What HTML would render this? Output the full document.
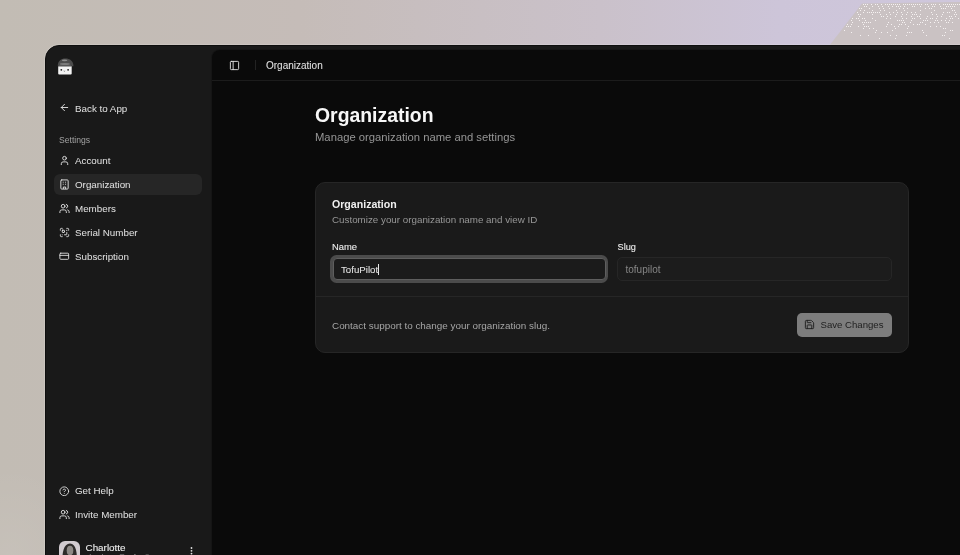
<!DOCTYPE html>
<html><head><meta charset="utf-8">
<style>
*{margin:0;padding:0;box-sizing:border-box}
html,body{width:960px;height:555px;overflow:hidden;-webkit-font-smoothing:antialiased}
body{position:relative;font-family:"Liberation Sans",sans-serif;background:radial-gradient(ellipse 80px 90px at 10px 555px,rgba(255,255,255,.07),rgba(255,255,255,0)),linear-gradient(90deg,#c2bcb4 0px,#c5bcb8 300px,#cac1ca 600px,#cdc5d9 780px,#cfc7dc 960px)}
.abs{position:absolute;white-space:nowrap}
.win{position:absolute;left:45px;top:45px;width:940px;height:560px;background:#191919;border-top-left-radius:14px;border:1px solid #0e0e0e;box-shadow:0 0 0 1px rgba(255,255,255,.14)}
.main{position:absolute;left:212px;top:50px;width:760px;height:520px;background:#0a0a0a;border-top-left-radius:8px;box-shadow:0 0 0 1px #151515}
.t10{font-size:10px;line-height:21px;color:#e4e4e4}
.item{position:absolute;left:54px;width:148px;height:21px;border-radius:6px}
.item svg{position:absolute;left:5px;top:5px}
.item span{position:absolute;left:21px;top:0;font-size:9.8px;line-height:21px;color:#dedede;white-space:nowrap;-webkit-text-stroke:0.05px #dedede}
.item.active{background:#262626}
svg.ic{fill:none;stroke:#e4e4e4;stroke-width:2;stroke-linecap:round;stroke-linejoin:round}
.card{position:absolute;left:315px;top:182px;width:594px;height:171px;background:#1a1a1a;border:1px solid #262626;border-radius:10px}
.input{position:absolute;height:24px;border-radius:5px}
</style></head><body><div id="root" style="position:absolute;left:0;top:0;width:960px;height:555px;will-change:transform">

<svg class="abs" style="left:0;top:0" width="960" height="46" viewBox="0 0 960 46"><path d="M862 3.5 L960 2 L960 46 L829 46 Z" fill="#cac2c3"/><path d="M863 4h1v1h-1zM865 4h1v1h-1zM867 4h1v1h-1zM871 4h1v1h-1zM875 4h1v1h-1zM877 4h1v1h-1zM881 4h1v1h-1zM885 4h1v1h-1zM887 4h1v1h-1zM889 4h1v1h-1zM891 4h1v1h-1zM893 4h1v1h-1zM895 4h1v1h-1zM897 4h1v1h-1zM899 4h1v1h-1zM903 4h1v1h-1zM905 4h1v1h-1zM907 4h1v1h-1zM909 4h1v1h-1zM911 4h1v1h-1zM913 4h1v1h-1zM915 4h1v1h-1zM917 4h1v1h-1zM919 4h1v1h-1zM921 4h1v1h-1zM925 4h1v1h-1zM927 4h1v1h-1zM931 4h1v1h-1zM933 4h1v1h-1zM935 4h1v1h-1zM939 4h1v1h-1zM943 4h1v1h-1zM945 4h1v1h-1zM947 4h1v1h-1zM949 4h1v1h-1zM951 4h1v1h-1zM953 4h1v1h-1zM955 4h1v1h-1zM957 4h1v1h-1zM959 4h1v1h-1zM864 6h1v1h-1zM866 6h1v1h-1zM872 6h1v1h-1zM878 6h1v1h-1zM882 6h1v1h-1zM888 6h1v1h-1zM892 6h1v1h-1zM896 6h1v1h-1zM898 6h1v1h-1zM900 6h1v1h-1zM904 6h1v1h-1zM912 6h1v1h-1zM914 6h1v1h-1zM920 6h1v1h-1zM928 6h1v1h-1zM932 6h1v1h-1zM934 6h1v1h-1zM940 6h1v1h-1zM946 6h1v1h-1zM948 6h1v1h-1zM950 6h1v1h-1zM952 6h1v1h-1zM954 6h1v1h-1zM859 8h1v1h-1zM861 8h1v1h-1zM869 8h1v1h-1zM879 8h1v1h-1zM883 8h1v1h-1zM889 8h1v1h-1zM899 8h1v1h-1zM903 8h1v1h-1zM907 8h1v1h-1zM925 8h1v1h-1zM929 8h1v1h-1zM931 8h1v1h-1zM941 8h1v1h-1zM943 8h1v1h-1zM945 8h1v1h-1zM951 8h1v1h-1zM860 10h1v1h-1zM864 10h1v1h-1zM872 10h1v1h-1zM880 10h1v1h-1zM884 10h1v1h-1zM896 10h1v1h-1zM904 10h1v1h-1zM920 10h1v1h-1zM934 10h1v1h-1zM952 10h1v1h-1zM954 10h1v1h-1zM857 12h1v1h-1zM863 12h1v1h-1zM867 12h1v1h-1zM869 12h1v1h-1zM871 12h1v1h-1zM873 12h1v1h-1zM875 12h1v1h-1zM877 12h1v1h-1zM879 12h1v1h-1zM889 12h1v1h-1zM893 12h1v1h-1zM897 12h1v1h-1zM901 12h1v1h-1zM907 12h1v1h-1zM911 12h1v1h-1zM915 12h1v1h-1zM931 12h1v1h-1zM943 12h1v1h-1zM947 12h1v1h-1zM949 12h1v1h-1zM955 12h1v1h-1zM858 14h1v1h-1zM860 14h1v1h-1zM872 14h1v1h-1zM880 14h1v1h-1zM886 14h1v1h-1zM890 14h1v1h-1zM896 14h1v1h-1zM902 14h1v1h-1zM906 14h1v1h-1zM912 14h1v1h-1zM914 14h1v1h-1zM916 14h1v1h-1zM920 14h1v1h-1zM932 14h1v1h-1zM936 14h1v1h-1zM942 14h1v1h-1zM954 14h1v1h-1zM956 14h1v1h-1zM859 16h1v1h-1zM881 16h1v1h-1zM883 16h1v1h-1zM887 16h1v1h-1zM895 16h1v1h-1zM901 16h1v1h-1zM911 16h1v1h-1zM917 16h1v1h-1zM919 16h1v1h-1zM927 16h1v1h-1zM937 16h1v1h-1zM941 16h1v1h-1zM949 16h1v1h-1zM951 16h1v1h-1zM955 16h1v1h-1zM852 18h1v1h-1zM856 18h1v1h-1zM858 18h1v1h-1zM862 18h1v1h-1zM864 18h1v1h-1zM872 18h1v1h-1zM886 18h1v1h-1zM890 18h1v1h-1zM902 18h1v1h-1zM906 18h1v1h-1zM912 18h1v1h-1zM914 18h1v1h-1zM920 18h1v1h-1zM926 18h1v1h-1zM930 18h1v1h-1zM932 18h1v1h-1zM936 18h1v1h-1zM946 18h1v1h-1zM950 18h1v1h-1zM952 18h1v1h-1zM958 18h1v1h-1zM851 20h1v1h-1zM859 20h1v1h-1zM865 20h1v1h-1zM875 20h1v1h-1zM897 20h1v1h-1zM899 20h1v1h-1zM901 20h1v1h-1zM903 20h1v1h-1zM911 20h1v1h-1zM923 20h1v1h-1zM925 20h1v1h-1zM927 20h1v1h-1zM935 20h1v1h-1zM937 20h1v1h-1zM941 20h1v1h-1zM945 20h1v1h-1zM949 20h1v1h-1zM852 22h1v1h-1zM862 22h1v1h-1zM864 22h1v1h-1zM866 22h1v1h-1zM868 22h1v1h-1zM870 22h1v1h-1zM888 22h1v1h-1zM902 22h1v1h-1zM904 22h1v1h-1zM910 22h1v1h-1zM920 22h1v1h-1zM922 22h1v1h-1zM930 22h1v1h-1zM934 22h1v1h-1zM938 22h1v1h-1zM946 22h1v1h-1zM948 22h1v1h-1zM952 22h1v1h-1zM847 24h1v1h-1zM851 24h1v1h-1zM863 24h1v1h-1zM887 24h1v1h-1zM891 24h1v1h-1zM899 24h1v1h-1zM901 24h1v1h-1zM905 24h1v1h-1zM913 24h1v1h-1zM917 24h1v1h-1zM919 24h1v1h-1zM925 24h1v1h-1zM846 26h1v1h-1zM848 26h1v1h-1zM850 26h1v1h-1zM858 26h1v1h-1zM864 26h1v1h-1zM866 26h1v1h-1zM868 26h1v1h-1zM886 26h1v1h-1zM894 26h1v1h-1zM898 26h1v1h-1zM908 26h1v1h-1zM930 26h1v1h-1zM936 26h1v1h-1zM940 26h1v1h-1zM863 28h1v1h-1zM869 28h1v1h-1zM873 28h1v1h-1zM895 28h1v1h-1zM907 28h1v1h-1zM943 28h1v1h-1zM945 28h1v1h-1zM844 30h1v1h-1zM876 30h1v1h-1zM892 30h1v1h-1zM922 30h1v1h-1zM950 30h1v1h-1zM952 30h1v1h-1zM851 32h1v1h-1zM875 32h1v1h-1zM881 32h1v1h-1zM887 32h1v1h-1zM907 32h1v1h-1zM909 32h1v1h-1zM911 32h1v1h-1zM923 32h1v1h-1zM945 32h1v1h-1zM860 35h1v1h-1zM868 35h1v1h-1zM890 35h1v1h-1zM896 35h1v1h-1zM906 35h1v1h-1zM926 35h1v1h-1zM942 35h1v1h-1zM944 35h1v1h-1zM879 38h1v1h-1zM895 38h1v1h-1zM949 38h1v1h-1z" fill="#f6f2f2"/></svg>
<div class="win"></div>

<!-- logo -->
<svg class="abs" style="left:55px;top:56px" width="21" height="21" viewBox="0 0 21 21">
  <path d="M2.8 10.2 C2.6 5.2 6 2.6 10.4 2.6 C15 2.6 18.4 5.2 18.4 10.2 Z" fill="#4c4c4c"/>
  <ellipse cx="9.6" cy="4.3" rx="2.8" ry="0.9" fill="#8c8c8c"/>
  <ellipse cx="9.9" cy="7.9" rx="5" ry="1" fill="#7c7c7c"/>
  <rect x="3.2" y="9.8" width="13.5" height="8.8" rx="1" fill="#f3f3f3"/>
  <rect x="3.2" y="9.6" width="13.5" height="0.8" fill="#2a2a2a"/>
  <circle cx="6.3" cy="13.8" r="0.9" fill="#1e1e1e"/>
  <circle cx="13.1" cy="13.8" r="0.9" fill="#1e1e1e"/>
  <path d="M8.7 14.9 Q9.4 15.7 10.1 14.9" fill="none" stroke="#444" stroke-width="0.6"/>
</svg>

<!-- sidebar -->
<div class="item" style="top:98px">
  <svg class="ic" style="top:4.4px" width="11" height="11" viewBox="0 0 24 24"><path d="m12 19-7-7 7-7"/><path d="M19 12H5"/></svg>
  <span>Back to App</span>
</div>
<div class="abs" style="left:59px;top:133.6px;font-size:8.6px;line-height:12px;color:#a3a3a3">Settings</div>
<div class="item" style="top:150px">
  <svg class="ic" style="top:5.4px" width="11" height="11" viewBox="0 0 24 24"><path d="M19 21v-2a4 4 0 0 0-4-4H9a4 4 0 0 0-4 4v2"/><circle cx="12" cy="7" r="4"/></svg>
  <span>Account</span>
</div>
<div class="item active" style="top:174px">
  <svg class="ic" width="11" height="11" viewBox="0 0 24 24"><rect width="16" height="20" x="4" y="2" rx="2" ry="2"/><path d="M9.5 21v-3.5h5V21"/><path d="M9 7h.5M14 7h.5M9 11.5h.5M14 11.5h.5" stroke-width="1.8"/></svg>
  <span>Organization</span>
</div>
<div class="item" style="top:198px">
  <svg class="ic" width="11" height="11" viewBox="0 0 24 24"><path d="M16 21v-2a4 4 0 0 0-4-4H6a4 4 0 0 0-4 4v2"/><circle cx="9" cy="7" r="4"/><path d="M22 21v-2a4 4 0 0 0-3-3.87"/><path d="M16 3.13a4 4 0 0 1 0 7.75"/></svg>
  <span>Members</span>
</div>
<div class="item" style="top:222px">
  <svg class="ic" width="11" height="11" viewBox="0 0 24 24"><path d="M17 12v4a1 1 0 0 1-1 1h-4"/><path d="M17 3h2a2 2 0 0 1 2 2v2"/><path d="M17 8V7"/><path d="M21 17v2a2 2 0 0 1-2 2h-2"/><path d="M3 7V5a2 2 0 0 1 2-2h2"/><path d="M7 17h.01"/><path d="M7 21H5a2 2 0 0 1-2-2v-2"/><rect x="7" y="7" width="5" height="5" rx="1"/></svg>
  <span>Serial Number</span>
</div>
<div class="item" style="top:246px">
  <svg class="ic" style="left:5.1px;top:5.2px" width="10.5" height="10.5" viewBox="0 0 24 24"><rect width="20" height="14" x="2" y="5" rx="2"/><line x1="2" x2="22" y1="10" y2="10"/></svg>
  <span>Subscription</span>
</div>
<div class="item" style="top:480px">
  <svg class="ic" style="top:5.6px;left:5.2px" width="10.5" height="10.5" viewBox="0 0 24 24"><circle cx="12" cy="12" r="10"/><path d="M9.09 9a3 3 0 0 1 5.83 1c0 2-3 3-3 3"/><path d="M12 17h.01"/></svg>
  <span>Get Help</span>
</div>
<div class="item" style="top:504px">
  <svg class="ic" width="11" height="11" viewBox="0 0 24 24"><path d="M16 21v-2a4 4 0 0 0-4-4H6a4 4 0 0 0-4 4v2"/><circle cx="9" cy="7" r="4"/><path d="M22 21v-2a4 4 0 0 0-3-3.87"/><path d="M16 3.13a4 4 0 0 1 0 7.75"/></svg>
  <span>Invite Member</span>
</div>

<!-- user -->
<div class="abs" style="left:59px;top:541px;width:21px;height:21px;border-radius:6px;background:#d2cbd0;overflow:hidden">
  <svg width="21" height="21" viewBox="0 0 21 21"><path d="M3.5 21 C3 12 4.5 2.5 11 2.5 C17 2.5 18.5 12 17.5 21 Z" fill="#2e2b2a"/><ellipse cx="11" cy="9.5" rx="3.3" ry="4.8" fill="#8e8986"/><path d="M7.5 15 Q11 19 14.5 15 L15 21 L7 21 Z" fill="#5a5552"/></svg>
</div>
<div class="abs" style="left:85.5px;top:541.5px;font-size:9.9px;line-height:12px;color:#ececec;-webkit-text-stroke:0.12px #ececec">Charlotte</div>
<div class="abs" style="left:85px;top:552.8px;font-size:8.5px;line-height:10px;color:#8a8a8a">charlotte@tofupilot.com</div>
<svg class="abs" style="left:189px;top:546px" width="5" height="10" viewBox="0 0 5 10"><circle cx="2.5" cy="2" r="0.9" fill="#e0e0e0"/><circle cx="2.5" cy="4.8" r="0.9" fill="#e0e0e0"/><circle cx="2.5" cy="7.6" r="0.9" fill="#e0e0e0"/></svg>

<!-- main -->
<div class="main"></div>
<div class="abs" style="left:212px;top:80px;width:760px;height:1px;background:#1c1c1c"></div>
<svg class="abs ic" style="left:229px;top:60px" width="11" height="11" viewBox="0 0 24 24"><rect width="18" height="18" x="3" y="3" rx="2"/><path d="M9 3v18"/></svg>
<div class="abs" style="left:255px;top:60px;width:1px;height:10px;background:#232323"></div>
<div class="abs" style="left:266px;top:59.5px;font-size:10px;line-height:12px;color:#e2e2e2;-webkit-text-stroke:0.05px #e2e2e2">Organization</div>

<div class="abs" style="left:315px;top:103px;font-size:19.4px;font-weight:bold;line-height:24px;color:#f7f7f7">Organization</div>
<div class="abs" style="left:315px;top:131px;font-size:11.25px;line-height:13px;color:#969696">Manage organization name and settings</div>

<div class="card"></div>
<div class="abs" style="left:332px;top:198px;font-size:10.6px;font-weight:bold;line-height:12px;color:#f0f0f0">Organization</div>
<div class="abs" style="left:332px;top:213.5px;font-size:9.8px;line-height:12px;color:#979797">Customize your organization name and view ID</div>

<div class="abs" style="left:332px;top:241px;font-size:9.4px;line-height:12px;color:#ededed;-webkit-text-stroke:0.1px #ededed">Name</div>
<div class="abs" style="left:617.5px;top:241px;font-size:9.2px;line-height:12px;color:#ededed;-webkit-text-stroke:0.1px #ededed">Slug</div>

<div class="input" style="left:330px;top:255px;width:278px;height:27.5px;border-radius:6.5px;background:#4b4b4b"></div>
<div class="input" style="left:332.5px;top:257.5px;width:273px;height:22.5px;background:#1b1b1b;border:1px solid #5e5e5e;border-radius:4px"></div>
<div class="abs" style="left:341px;top:263.5px;font-size:9.7px;line-height:12px;color:#e6e6e6;-webkit-text-stroke:0.05px #e6e6e6">TofuPilot</div>
<div class="abs" style="left:378.3px;top:263.5px;width:1px;height:11px;background:#e6e6e6"></div>

<div class="input" style="left:617px;top:257px;width:275px;height:23.5px;background:#1c1c1c;border:1px solid #262626"></div>
<div class="abs" style="left:625.5px;top:264.3px;font-size:10px;line-height:12px;color:#858585">tofupilot</div>

<div class="abs" style="left:316px;top:296px;width:592px;height:1px;background:#262626"></div>
<div class="abs" style="left:332px;top:319.5px;font-size:9.9px;line-height:12px;color:#a6a6a6">Contact support to change your organization slug.</div>

<div class="abs" style="left:796.5px;top:313px;width:95.5px;height:24px;border-radius:5px;background:#7d7d7d"></div>
<svg class="abs" style="left:803.5px;top:319px" width="11" height="11" viewBox="0 0 24 24" fill="none" stroke="#1e1e1e" stroke-width="2" stroke-linecap="round" stroke-linejoin="round"><path d="M15.2 3a2 2 0 0 1 1.4.6l3.8 3.8a2 2 0 0 1 .6 1.4V19a2 2 0 0 1-2 2H5a2 2 0 0 1-2-2V5a2 2 0 0 1 2-2z"/><path d="M17 21v-7a1 1 0 0 0-1-1H8a1 1 0 0 0-1 1v7"/><path d="M7 3v4a1 1 0 0 0 1 1h7"/></svg>
<div class="abs" style="left:820.5px;top:319px;font-size:9.6px;line-height:12px;color:#1e1e1e">Save Changes</div>

</div></body></html>
